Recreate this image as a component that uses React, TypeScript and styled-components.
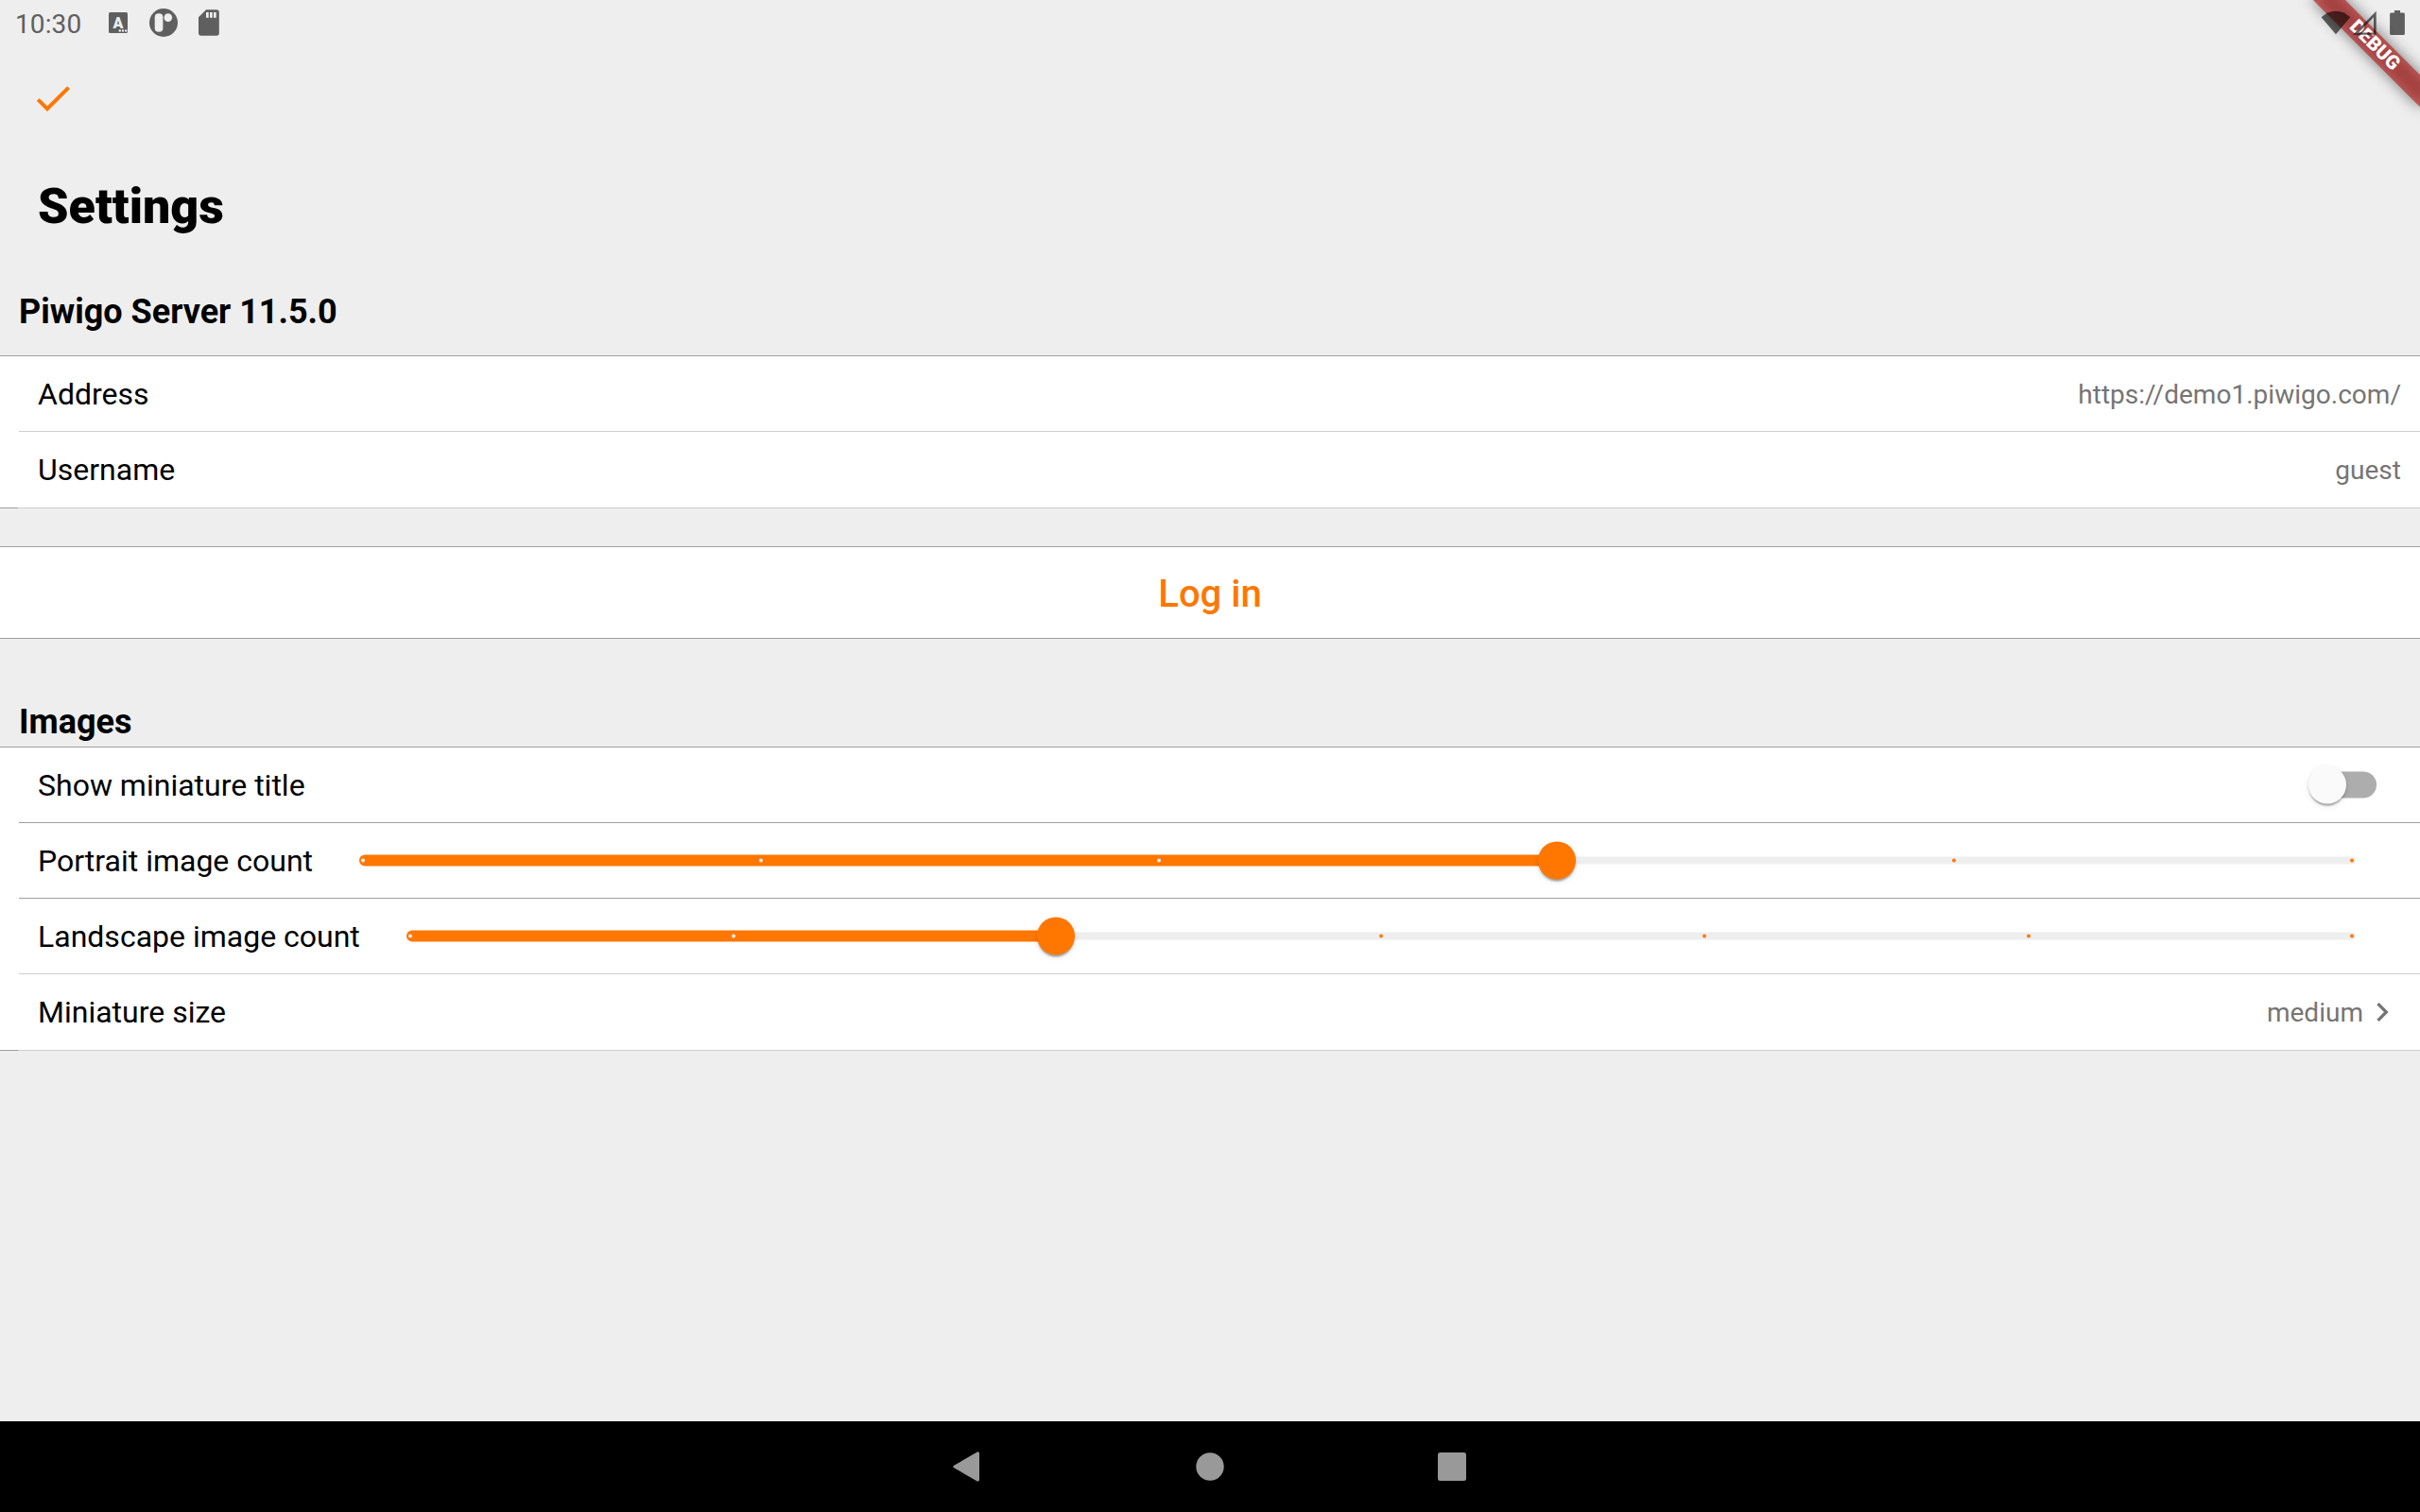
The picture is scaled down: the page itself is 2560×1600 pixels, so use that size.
import React from 'react'
import styled, { createGlobalStyle } from 'styled-components'

const accent = '#ff7700'

const App = () => {
  return (
    <Screen>
      <GlobalStyle />

      <RibbonCorner>
        <RibbonShadow />
        <Ribbon>DEBUG</Ribbon>
      </RibbonCorner>

      <StatusBar>
        <Clock>10:30</Clock>
        <Notifications />
        <Spacer />
        <SystemIcons />
      </StatusBar>

      <AppBar>
        <svg width="48" height="48" viewBox="0 0 24 24" fill={accent}>
          <path d="M9 16.17L4.83 12l-1.42 1.41L9 19 21 7l-1.41-1.41z" />
        </svg>
      </AppBar>

      <PageTitle>Settings</PageTitle>

      <SectionTitle height="127px" gap="25px">Piwigo Server 11.5.0</SectionTitle>
      <Section>
        <Row>
          <Label>Address</Label>
          <Value>https://demo1.piwigo.com/</Value>
        </Row>
        <Divider />
        <Row>
          <Label>Username</Label>
          <Value>guest</Value>
        </Row>
        <LastDivider />
      </Section>

      <LoginButton>Log in</LoginButton>

      <SectionTitle height="114px" gap="5px">Images</SectionTitle>
      <Section>
        <Row>
          <Label>Show miniature title</Label>
          <Switch>
            <SwitchThumb />
          </Switch>
        </Row>
        <Divider dark />
        <Row>
          <Label>Portrait image count</Label>
          <Slider value={3} divisions={5} />
        </Row>
        <Divider dark />
        <Row>
          <Label>Landscape image count</Label>
          <Slider value={2} divisions={6} />
        </Row>
        <Divider />
        <Row>
          <Label>Miniature size</Label>
          <Value pad="60px">medium</Value>
          <Chevron width="40" height="40" viewBox="0 0 24 24" fill="#757575">
            <path d="M10 6L8.59 7.41 13.17 12l-4.58 4.59L10 18l6-6z" />
          </Chevron>
        </Row>
        <LastDivider />
      </Section>

      <Spacer />

      <NavBar>
        <NavIcon viewBox="0 0 40 40">
          <path d="M30.5 5.9v28.2L5.9 20z" strokeWidth="3" strokeLinejoin="round" />
        </NavIcon>
        <NavIcon viewBox="0 0 40 40">
          <circle cx="20" cy="20" r="14.7" stroke="none" />
        </NavIcon>
        <NavIcon viewBox="0 0 40 40">
          <rect x="5" y="5" width="30" height="30" rx="2.5" stroke="none" />
        </NavIcon>
      </NavBar>
    </Screen>
  )
}

export default App

const Slider = ({ value, divisions }: { value: number; divisions: number }) => {
  const percent = (value / divisions) * 100
  return (
    <Track>
      <ActiveTrack style={{ width: `${percent}%` }} />
      <Ticks>
        {Array.from({ length: divisions + 1 }, (_, i) => (
          <Tick key={i} active={i < value} hide={i === value} />
        ))}
      </Ticks>
      <Thumb style={{ left: `${percent}%` }} />
    </Track>
  )
}

const Notifications = () => (
  <svg width="130" height="48" viewBox="0 0 130 48" fill="#5f5f5f">
    <rect x="10" y="13" width="20" height="22" rx="1.5" />
    <text x="19.9" y="29.5" textAnchor="middle" fontFamily="Roboto, sans-serif" fontSize="16" fontWeight="900" fill="#eee">
      A
    </text>
    <g fill="#eee">
      <circle cx="21.8" cy="32.5" r="1.2" />
      <circle cx="25" cy="32.5" r="1.2" />
      <circle cx="28.2" cy="32.5" r="1.2" />
    </g>
    <circle cx="68" cy="24" r="15" />
    <rect x="58.7" y="14.3" width="8.7" height="19.4" rx="4" fill="#eee" />
    <circle cx="72.8" cy="18.6" r="4.3" fill="#eee" />
    <path d="M113 10.3h11.2a2.6 2.6 0 0 1 2.6 2.6v22.2a2.6 2.6 0 0 1-2.6 2.6h-16.6a2.6 2.6 0 0 1-2.6-2.6V18.3z" />
    <g fill="#eee">
      <rect x="113" y="13" width="2.7" height="5.8" />
      <rect x="117" y="13" width="2.7" height="5.8" />
      <rect x="121" y="13" width="2.7" height="5.8" />
    </g>
  </svg>
)

const SystemIcons = () => (
  <svg width="120" height="48" viewBox="0 0 120 48" fill="rgba(0,0,0,.6)">
    <path d="M15.6 18.2C24.5 9.6 37.5 9.6 46.2 18.2L31 36.2z" />
    <path fillRule="evenodd" d="M49 36.8L73.7 11.700V36.800zM55 34.500H71V18.300z" />
    <path d="M93 11h6v2.4h3.4a1.5 1.5 0 0 1 1.5 1.5v20.6a1.5 1.5 0 0 1-1.5 1.5h-12.8a1.5 1.5 0 0 1-1.5-1.500V14.900a1.5 1.5 0 0 1 1.5-1.500H93z" />
  </svg>
)

const GlobalStyle = createGlobalStyle`
  * {
    box-sizing: border-box;
  }
  body {
    margin: 0;
    background: #eee;
    font-family: Roboto, sans-serif;
    overflow: hidden;
  }
`

const Screen = styled.div`
  position: relative;
  display: flex;
  flex-direction: column;
  width: 2560px;
  height: 1600px;
  background: #eee;
  overflow: hidden;
`

const Spacer = styled.div`
  flex: 1;
`

const StatusBar = styled.div`
  position: relative;
  display: flex;
  align-items: center;
  height: 48px;
  padding-left: 16px;
`

const Clock = styled.div`
  width: 89px;
  font-size: 28px;
  line-height: 32px;
  padding-top: 4px;
  letter-spacing: 0.1px;
  color: #5f5f5f;
`

/* debug banner hangs over the top right corner */
const RibbonCorner = styled.div`
  position: absolute;
  top: 0;
  right: 0;
  width: 0;
  height: 0;
  transform: rotate(45deg);
`

const RibbonShadow = styled.div`
  position: absolute;
  left: -80px;
  top: 56px;
  width: 160px;
  height: 24px;
  background: rgba(0, 0, 0, 0.5);
  filter: blur(7.9px);
`

const Ribbon = styled.div`
  position: absolute;
  left: -80px;
  top: 56px;
  width: 160px;
  height: 24px;
  background: rgba(183, 28, 28, 0.63);
  color: #fff;
  font-size: 20.4px;
  font-weight: 900;
  line-height: 22px;
  text-align: center;
`

const AppBar = styled.div`
  display: flex;
  align-items: center;
  height: 112px;
  padding-left: 32px;
`

const PageTitle = styled.h1`
  margin: 28px 0 0 40px;
  font-size: 52px;
  line-height: 61px;
  font-weight: 900;
  color: #000;
`

const SectionTitle = styled.h2<{ height: string; gap: string }>`
  display: flex;
  align-items: flex-end;
  height: ${(props) => props.height};
  margin: 0;
  padding: 0 0 ${(props) => props.gap} 20px;
  font-size: 36px;
  line-height: 42px;
  font-weight: 700;
  color: #000;
`

const Section = styled.div`
  background: #fff;
  border-top: 1px solid #9e9e9e;
`

const Row = styled.div`
  position: relative;
  display: flex;
  align-items: center;
  height: 79px;
  padding-left: 40px;

  &:nth-last-child(2) {
    height: 80px;
    padding-bottom: 1px;
  }
`

const Label = styled.div`
  font-size: 32px;
  line-height: 38px;
  color: #000;
  white-space: nowrap;
`

const Value = styled.div<{ pad?: string }>`
  margin-left: auto;
  padding: 2px ${(props) => props.pad || '20px'} 0 0;
  font-size: 28px;
  line-height: 33px;
  letter-spacing: 0.02px;
  color: #757575;
`

const Chevron = styled.svg`
  position: absolute;
  top: 20px;
  right: 20px;
`

const Divider = styled.div<{ dark?: boolean }>`
  height: 1px;
  margin-left: 20px;
  background: ${(props) => (props.dark ? '#9e9e9e' : '#cecece')};
`

const LastDivider = styled.div`
  height: 1px;
  background: linear-gradient(to right, #9e9e9e 19px, #cecece 19px);
`

const LoginButton = styled.button`
  height: 98px;
  margin-top: 40px;
  padding: 2px 0 0;
  border: 0;
  border-top: 1px solid #9e9e9e;
  border-bottom: 1px solid #9e9e9e;
  background: #fff;
  color: ${accent};
  font-family: inherit;
  font-size: 40px;
  font-weight: 500;
`

const Switch = styled.div`
  position: relative;
  width: 66px;
  height: 28px;
  margin: 0 46px 1px auto;
  border-radius: 14px;
  background: #adadad;
  transform: translateY(0.5px);
`

const SwitchThumb = styled.div`
  position: absolute;
  left: -6px;
  top: -6px;
  width: 40px;
  height: 40px;
  border-radius: 50%;
  background: #fafafa;
  box-shadow: 0 4px 2px -2px rgba(0, 0, 0, 0.2), 0 2px 2px rgba(0, 0, 0, 0.14), 0 2px 6px rgba(0, 0, 0, 0.12);
`

const Track = styled.div`
  position: relative;
  flex: 1;
  height: 8px;
  margin: 0 68px 1px 49px;
  border-radius: 4px;
  background: #eee;
  transform: translateY(0.5px);
`

const ActiveTrack = styled.div`
  position: absolute;
  left: 0;
  top: -2px;
  height: 12px;
  border-radius: 6px 0 0 6px;
  background: ${accent};
`

const Ticks = styled.div`
  position: relative;
  display: flex;
  justify-content: space-between;
  padding: 2px;
`

const Tick = styled.span<{ active: boolean; hide: boolean }>`
  width: 4px;
  height: 4px;
  border-radius: 50%;
  background: ${(props) => (props.active ? '#eee' : accent)};
  visibility: ${(props) => (props.hide ? 'hidden' : 'visible')};
`

const Thumb = styled.div`
  position: absolute;
  top: -16px;
  width: 40px;
  height: 40px;
  margin-left: -20px;
  border-radius: 50%;
  background: ${accent};
  box-shadow: 0 4px 2px -2px rgba(0, 0, 0, 0.2), 0 2px 2px rgba(0, 0, 0, 0.14), 0 2px 6px rgba(0, 0, 0, 0.12);
`

const NavBar = styled.div`
  display: flex;
  justify-content: center;
  align-items: center;
  gap: 216px;
  height: 96px;
  background: #000;
`

const NavIcon = styled.svg`
  width: 40px;
  height: 40px;
  fill: #999;
  stroke: #999;
`
